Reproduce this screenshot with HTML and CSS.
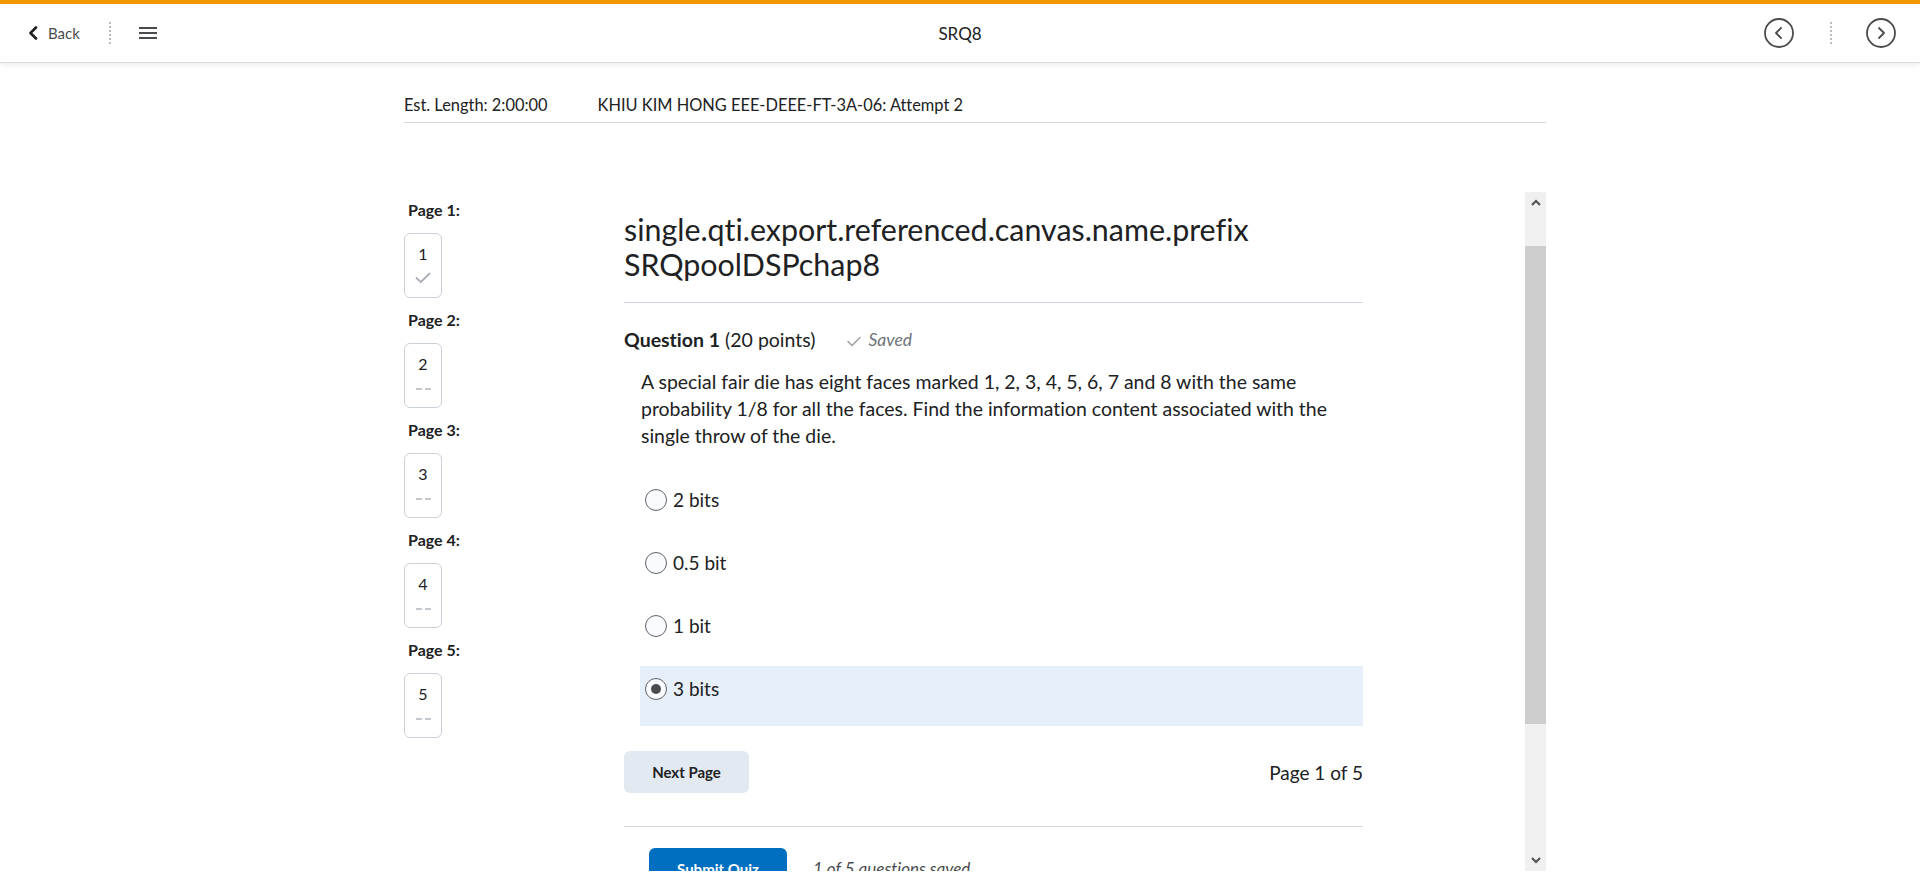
FILE: index.html
```html
<!DOCTYPE html>
<html lang="en">
<head>
<meta charset="utf-8">
<title>SRQ8</title>
<link rel="stylesheet" href="styles.css">
</head>
<body>
<div class="topbar"></div>
<header class="navbar">
  <div class="nav-left">
    <a class="back">
      <svg class="back-icon" viewBox="0 0 10 14" width="10" height="14"><path d="M8 1.5 L2.5 7 L8 12.5"/></svg>
      <span>Back</span>
    </a>
    <span class="vdots"></span>
    <span class="hamburger"><svg viewBox="0 0 18 12" width="18" height="12"><path d="M0 1h18M0 6h18M0 11h18"/></svg></span>
  </div>
  <div class="nav-title">SRQ8</div>
  <div class="nav-right">
    <span class="circle-btn"><svg viewBox="0 0 30 30" width="30" height="30"><circle cx="15" cy="15" r="14"/><path d="M17 10 L12 15 L17 20"/></svg></span>
    <span class="vdots"></span>
    <span class="circle-btn"><svg viewBox="0 0 30 30" width="30" height="30"><circle cx="15" cy="15" r="14"/><path d="M13 10 L18 15 L13 20"/></svg></span>
  </div>
</header>

<main class="page">
  <div class="info-row">
    <span>Est. Length: 2:00:00</span>
    <span>KHIU KIM HONG EEE-DEEE-FT-3A-06: Attempt 2</span>
  </div>

  <div class="frame">
    <div class="viewport">
      <div class="quiz">
        <nav class="pages">
          <div class="page-item">
            <div class="page-label">Page 1:</div>
            <div class="page-box"><span class="num">1</span><svg class="done" viewBox="0 0 16 12" width="16" height="12"><path d="M1.5 6 L5.8 10.2 L14.5 1.5"/></svg></div>
          </div>
          <div class="page-item">
            <div class="page-label">Page 2:</div>
            <div class="page-box"><span class="num">2</span><span class="dash"></span></div>
          </div>
          <div class="page-item">
            <div class="page-label">Page 3:</div>
            <div class="page-box"><span class="num">3</span><span class="dash"></span></div>
          </div>
          <div class="page-item">
            <div class="page-label">Page 4:</div>
            <div class="page-box"><span class="num">4</span><span class="dash"></span></div>
          </div>
          <div class="page-item">
            <div class="page-label">Page 5:</div>
            <div class="page-box"><span class="num">5</span><span class="dash"></span></div>
          </div>
        </nav>

        <section class="content">
          <h1 class="quiz-title">single.qti.export.referenced.canvas.name.prefix SRQpoolDSPchap8</h1>
          <hr class="rule">
          <div class="q-head"><strong>Question 1</strong> (20 points)<span class="saved"><svg viewBox="0 0 14 11" width="14" height="11"><path d="M1 5.5 L5 9.5 L13 1.5"/></svg><em>Saved</em></span></div>
          <div class="q-body">
            <p class="q-text">A special fair die has eight faces marked 1, 2, 3, 4, 5, 6, 7 and 8 with the same probability 1/8 for all the faces. Find the information content associated with the single throw of the die.</p>
            <div class="options">
              <label class="option"><input class="radio" type="radio" name="q1"><span>2 bits</span></label>
              <label class="option"><input class="radio" type="radio" name="q1"><span>0.5 bit</span></label>
              <label class="option"><input class="radio" type="radio" name="q1"><span>1 bit</span></label>
              <label class="option selected"><input class="radio" type="radio" name="q1" checked><span>3 bits</span></label>
            </div>
          </div>
          <div class="pager">
            <button class="btn-next">Next Page</button>
            <span class="page-count">Page 1 of 5</span>
          </div>
          <hr class="rule rule-bottom">
          <div class="submit-row">
            <button class="btn-submit">Submit Quiz</button>
            <em class="saved-count">1 of 5 questions saved</em>
          </div>
        </section>
      </div>
    </div>

    <div class="scrollbar">
      <span class="sb-arrow"><svg viewBox="0 0 10 7" width="10" height="7"><path d="M1 6 L5 2 L9 6"/></svg></span>
      <div class="sb-track"><div class="sb-thumb"></div></div>
      <span class="sb-arrow"><svg viewBox="0 0 10 7" width="10" height="7"><path d="M1 1 L5 5 L9 1"/></svg></span>
    </div>
  </div>
</main>
</body>
</html>
```

FILE: styles.css
```css
* { box-sizing: border-box; }
html, body { margin: 0; padding: 0; }
body {
  font-family: Lato, "Noto Sans", sans-serif;
  font-variant-ligatures: none;
  color: #202122;
  background: #fff;
  height: 889px;
  overflow: hidden;
}

.topbar { height: 4px; background: #f39800; }

.navbar {
  height: 59px;
  display: grid;
  grid-template-columns: 1fr auto 1fr;
  align-items: center;
  border-bottom: 1px solid #d9d9d9;
  box-shadow: 0 2px 5px rgba(0, 0, 0, 0.07);
  position: relative;
  z-index: 1;
  background: #fff;
}
.nav-left { display: flex; align-items: center; padding-left: 28px; }
.back { display: flex; align-items: center; gap: 10px; color: #494c4e; font-size: 15px; }
.back-icon path { fill: none; stroke: #202122; stroke-width: 2.6; stroke-linecap: round; stroke-linejoin: round; }
.vdots { display: block; width: 0; height: 22px; border-left: 2px dotted #b8bcc0; }
.nav-left .vdots { margin-left: 29px; }
.hamburger { display: flex; margin-left: 28px; }
.hamburger path { stroke: #494c4e; stroke-width: 2; }
.nav-title { font-size: 17px; color: #202122; }
.nav-right { display: flex; align-items: center; justify-content: flex-end; padding-right: 24px; }
.circle-btn { display: flex; }
.circle-btn circle { fill: none; stroke: #494c4e; stroke-width: 1.8; }
.circle-btn path { fill: none; stroke: #494c4e; stroke-width: 1.8; stroke-linecap: round; stroke-linejoin: round; }
.nav-right .vdots { margin: 0 34px 0 36px; }

.page { margin-left: 404px; width: 1142px; }
.info-row {
  margin-top: 32px;
  display: flex;
  gap: 50px;
  font-size: 16.4px;
  line-height: 20px;
  padding-bottom: 7px;
  border-bottom: 1px solid #d3d9e3;
  color: #202122;
}

/* quiz frame: content viewport + scrollbar */
.frame {
  margin-top: 69px;
  height: 679px;
  display: flex;
}
.viewport { flex: 1; overflow: hidden; }

.scrollbar {
  width: 21px;
  flex: none;
  display: flex;
  flex-direction: column;
  background: #f0f0f0;
}
.sb-arrow { height: 21px; display: flex; align-items: center; justify-content: center; flex: none; }
.sb-arrow path { fill: none; stroke: #505050; stroke-width: 2; }
.sb-track { flex: 1; }
.sb-thumb { margin-top: 33px; height: 478px; background: #cdcdcd; }

.quiz { display: flex; padding-top: 7px; }

.pages { width: 220px; flex: none; }
.page-item { margin-bottom: 11px; }
.page-label { font-size: 16px; font-weight: 700; line-height: 22px; padding-left: 4px; }
.page-box {
  margin-top: 12px;
  width: 38px;
  height: 65px;
  border: 1px solid #c9d0d8;
  border-radius: 6px;
  display: flex;
  flex-direction: column;
  align-items: center;
  padding-top: 9px;
}
.num { font-size: 16px; line-height: 22px; color: #202122; }
.done { margin-top: 7px; }
.done path { fill: none; stroke: #a8aeb4; stroke-width: 1.8; stroke-linecap: round; stroke-linejoin: round; }
.dash {
  margin-top: 13px;
  width: 15px;
  height: 2px;
  background: linear-gradient(to right, #c3c8cd 0 6px, transparent 6px 9px, #c3c8cd 9px 15px);
}

.content { width: 739px; flex: none; margin-top: 13px; }
.quiz-title { margin: 0; font-size: 30.4px; line-height: 35px; font-weight: 400; color: #202122; }
.rule { margin: 20px 0 0; border: 0; border-top: 1px solid #d3d9e3; height: 0; }
.q-head { margin-top: 25px; font-size: 19.5px; line-height: 24px; }
.q-head strong { font-weight: 700; }
.saved { display: inline-flex; align-items: center; gap: 8px; margin-left: 31px; color: #6e7376; font-size: 17.5px; vertical-align: top; }
.saved svg { position: relative; top: 1px; }
.saved path { fill: none; stroke: #9ea3a8; stroke-width: 1.6; stroke-linecap: round; stroke-linejoin: round; }
.q-body { padding-left: 16px; }
.q-text { margin: 16px 0 0; padding-left: 1px; font-size: 19.45px; line-height: 27px; color: #202122; }
.options { margin-top: 28px; }
.option {
  display: flex;
  align-items: flex-start;
  gap: 6px;
  height: 60px;
  margin-bottom: 3px;
  padding: 12px 0 0 5px;
  font-size: 19px;
  line-height: 22px;
}
.option.selected { background: #e7f0fa; }
.radio {
  -webkit-appearance: none;
  appearance: none;
  margin: 0;
  width: 22px;
  height: 22px;
  border: 1px solid #5f6366;
  border-radius: 50%;
  background: #f9fbff;
  position: relative;
  flex: none;
}
.radio:checked::after {
  content: "";
  position: absolute;
  left: 5px;
  top: 5px;
  width: 10px;
  height: 10px;
  border-radius: 50%;
  background: #494c4e;
}

.pager { margin-top: 25px; display: flex; justify-content: space-between; align-items: center; }
.btn-next {
  width: 125px;
  height: 42px;
  border: 0;
  border-radius: 6px;
  background: #e3e9f1;
  font-family: inherit;
  font-size: 15px;
  font-weight: 700;
  color: #202122;
}
.page-count { font-size: 19px; color: #202122; }
.rule-bottom { margin-top: 33px; }
.submit-row { margin-top: 21px; padding-left: 25px; display: flex; align-items: center; gap: 26px; }
.btn-submit {
  width: 138px;
  height: 41px;
  border: 0;
  border-radius: 6px;
  background: #006fbf;
  color: #fff;
  font-family: inherit;
  font-size: 15px;
  font-weight: 700;
}
.saved-count { color: #494c4e; font-size: 17px; }
```
